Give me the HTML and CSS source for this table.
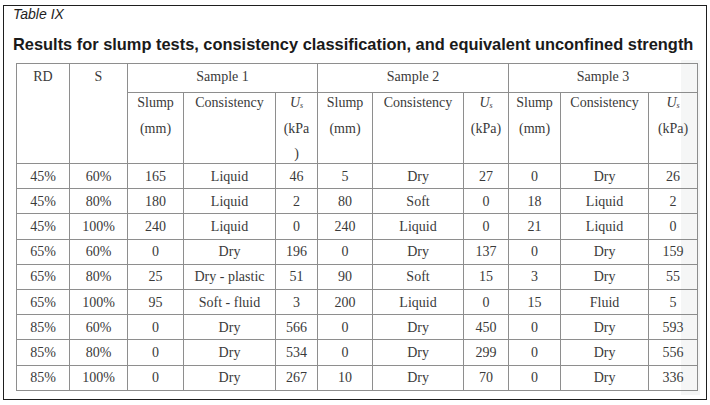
FILE: index.html
```html
<!DOCTYPE html>
<html>
<head>
<meta charset="utf-8">
<link rel="stylesheet" href="styles.css">
</head>
<body>
<div class="frame">
  <div class="label">Table IX</div>
  <h1 class="title">Results for slump tests, consistency classification, and equivalent unconfined strength</h1>
  <table class="data">
    <colgroup>
      <col class="c-rd"><col class="c-s">
      <col class="c-sl1"><col class="c-co1"><col class="c-us1">
      <col class="c-sl2"><col class="c-co2"><col class="c-us2">
      <col class="c-sl3"><col class="c-co3"><col class="c-us3">
    </colgroup>
    <thead>
      <tr class="h1">
        <th rowspan="2"><div class="hd">RD</div></th>
        <th rowspan="2"><div class="hd">S</div></th>
        <th colspan="3"><div class="hd">Sample 1</div></th>
        <th colspan="3"><div class="hd">Sample 2</div></th>
        <th colspan="3"><div class="hd">Sample 3</div></th>
      </tr>
      <tr class="h2">
        <th><div class="sub">Slump<br>(mm)</div></th>
        <th><div class="sub">Consistency</div></th>
        <th><div class="sub"><i>U</i><sub><i>s</i></sub><br>(kPa<br>)</div></th>
        <th><div class="sub">Slump<br>(mm)</div></th>
        <th><div class="sub">Consistency</div></th>
        <th><div class="sub"><i>U</i><sub><i>s</i></sub><br>(kPa)</div></th>
        <th><div class="sub">Slump<br>(mm)</div></th>
        <th><div class="sub">Consistency</div></th>
        <th><div class="sub"><i>U</i><sub><i>s</i></sub><br>(kPa)</div></th>
      </tr>
    </thead>
    <tbody>
      <tr><td>45%</td><td>60%</td><td>165</td><td>Liquid</td><td>46</td><td>5</td><td>Dry</td><td>27</td><td>0</td><td>Dry</td><td>26</td></tr>
      <tr><td>45%</td><td>80%</td><td>180</td><td>Liquid</td><td>2</td><td>80</td><td>Soft</td><td>0</td><td>18</td><td>Liquid</td><td>2</td></tr>
      <tr><td>45%</td><td>100%</td><td>240</td><td>Liquid</td><td>0</td><td>240</td><td>Liquid</td><td>0</td><td>21</td><td>Liquid</td><td>0</td></tr>
      <tr><td>65%</td><td>60%</td><td>0</td><td>Dry</td><td>196</td><td>0</td><td>Dry</td><td>137</td><td>0</td><td>Dry</td><td>159</td></tr>
      <tr><td>65%</td><td>80%</td><td>25</td><td>Dry - plastic</td><td>51</td><td>90</td><td>Soft</td><td>15</td><td>3</td><td>Dry</td><td>55</td></tr>
      <tr><td>65%</td><td>100%</td><td>95</td><td>Soft - fluid</td><td>3</td><td>200</td><td>Liquid</td><td>0</td><td>15</td><td>Fluid</td><td>5</td></tr>
      <tr><td>85%</td><td>60%</td><td>0</td><td>Dry</td><td>566</td><td>0</td><td>Dry</td><td>450</td><td>0</td><td>Dry</td><td>593</td></tr>
      <tr><td>85%</td><td>80%</td><td>0</td><td>Dry</td><td>534</td><td>0</td><td>Dry</td><td>299</td><td>0</td><td>Dry</td><td>556</td></tr>
      <tr><td>85%</td><td>100%</td><td>0</td><td>Dry</td><td>267</td><td>10</td><td>Dry</td><td>70</td><td>0</td><td>Dry</td><td>336</td></tr>
    </tbody>
  </table>
  <div class="shade"></div>
</div>
</body>
</html>
```

FILE: styles.css
```css
html, body {
  margin: 0;
  padding: 0;
  background: #ffffff;
}

.frame {
  position: relative;
  box-sizing: border-box;
  margin: 5px 0 0 3px;
  width: 704px;
  height: 395px;
  border: 1.5px solid #1e1e1e;
  padding: 0 0 0 9px;
}

.label {
  font-family: "Liberation Sans", Arial, sans-serif;
  font-style: italic;
  font-size: 14px;
  line-height: 14px;
  color: #1e1e1e;
  margin-top: 1px;
}

.title {
  font-family: "Liberation Sans", Arial, sans-serif;
  font-weight: bold;
  font-size: 16.4px;
  line-height: 20px;
  color: #1a1a1a;
  margin: 13px 0 0 0;
  white-space: nowrap;
}

.data {
  border-collapse: collapse;
  table-layout: fixed;
  width: 681px;
  margin: 9px 0 0 3px;
  font-family: "Liberation Serif", "Times New Roman", serif;
  font-size: 14px;
  color: #3a3a3a;
}

.c-rd { width: 53px; }
.c-s { width: 58px; }
.c-sl1 { width: 56px; }
.c-co1 { width: 92px; }
.c-us1 { width: 42px; }
.c-sl2 { width: 55px; }
.c-co2 { width: 91px; }
.c-us2 { width: 45px; }
.c-sl3 { width: 52px; }
.c-co3 { width: 88px; }
.c-us3 { width: 49px; }

.data th,
.data td {
  border: 1px solid #8e8e8e;
  padding: 0;
  text-align: center;
  font-weight: normal;
}

.data th {
  vertical-align: top;
}

.h1 th {
  height: 28px;
}

.h2 th {
  height: 70px;
}

.hd {
  line-height: 24px;
  padding-top: 1px;
}

.sub {
  line-height: 25.5px;
  margin-top: -3px;
  height: 64px;
}

.sub sub {
  font-size: 8px;
  line-height: 0;
  vertical-align: -1px;
}

.data td {
  height: 24.2px;
  line-height: 17px;
  vertical-align: middle;
}

.shade {
  position: absolute;
  left: 677px;
  top: 54px;
  width: 19px;
  height: 335px;
  background: rgba(120, 130, 130, 0.07);
  pointer-events: none;
}
```
